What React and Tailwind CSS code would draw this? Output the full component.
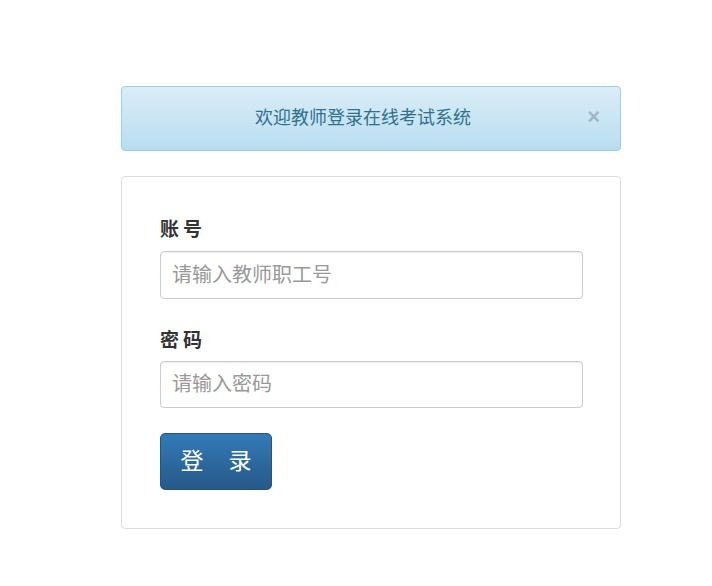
import React from "react";

const font = { fontFamily: '"Liberation Sans", "Noto Sans CJK SC", sans-serif' };

const App = () => {
  return (
    <div className="min-h-[586px] w-[712px] bg-white" style={font}>
      <div className="ml-[121px] w-[500px] pt-[86px]">
        {/* Alert */}
        <div className="relative flex h-[65px] items-center justify-center rounded-[4px] border border-[#9acfea] bg-gradient-to-b from-[#d9edf7] to-[#b9def0] pl-[15px] pr-[31px] text-[18px] text-[#31708f]">
          <span>欢迎教师登录在线考试系统</span>
          <button className="absolute right-[20px] top-[19px] text-[22px] font-bold leading-[22px] text-[#000] opacity-20">
            ×
          </button>
        </div>

        {/* Login card */}
        <div className="mt-[25px] rounded-[4px] border border-[#dddddd] bg-white px-[38px] pb-[38px] pt-[41px]">
          <label className="block text-[19px] font-bold leading-[24px] tracking-[4px] text-[#333]">
            账号
          </label>
          <input
            className="mt-[9px] block h-[48px] w-[423px] rounded-[4px] border border-[#cccccc] px-[11px] text-[20px] text-[#555] shadow-[inset_0_1px_1px_rgba(0,0,0,0.075)] outline-none placeholder:text-[#999]"
            placeholder="请输入教师职工号"
          />

          <label className="mt-[30px] block text-[19px] font-bold leading-[24px] tracking-[4px] text-[#333]">
            密码
          </label>
          <input
            type="password"
            className="mt-[8px] block h-[47px] w-[423px] rounded-[4px] border border-[#cccccc] px-[11px] text-[20px] text-[#555] shadow-[inset_0_1px_1px_rgba(0,0,0,0.075)] outline-none placeholder:text-[#999]"
            placeholder="请输入密码"
          />

          <button className="mt-[25px] flex h-[57px] w-[112px] items-center justify-center gap-[25px] rounded-[5px] border border-[#245580] bg-gradient-to-b from-[#337ab7] to-[#265a88] text-[23px] text-white">
            <span>登</span>
            <span>录</span>
          </button>
        </div>
      </div>
    </div>
  );
};

export default App;
